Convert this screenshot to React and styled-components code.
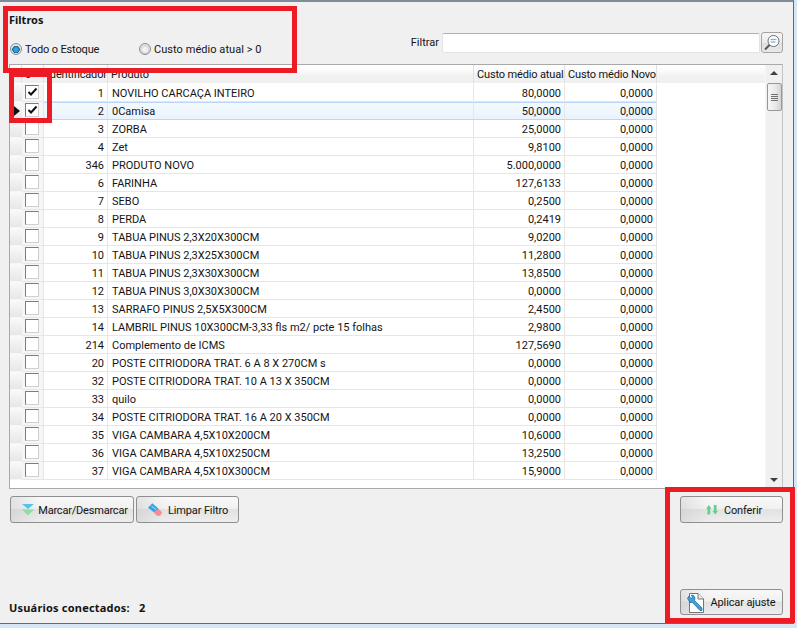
import React from "react";
import styled, { createGlobalStyle } from "styled-components";

const GlobalStyle = createGlobalStyle`
  html, body {
    margin: 0;
    padding: 0;
    background: #d6e6f4;
    overflow: hidden;
  }
  * {
    box-sizing: border-box;
  }
`;

const COLUMNS = "12px 22px 64px 366px 91px 92px 108px";

const products = [
  { id: 1, name: "NOVILHO CARCAÇA INTEIRO", cost: "80,0000", checked: true },
  { id: 2, name: "0Camisa", cost: "50,0000", checked: true, current: true },
  { id: 3, name: "ZORBA", cost: "25,0000" },
  { id: 4, name: "Zet", cost: "9,8100" },
  { id: 346, name: "PRODUTO NOVO", cost: "5.000,0000" },
  { id: 6, name: "FARINHA", cost: "127,6133" },
  { id: 7, name: "SEBO", cost: "0,2500" },
  { id: 8, name: "PERDA", cost: "0,2419" },
  { id: 9, name: "TABUA PINUS 2,3X20X300CM", cost: "9,0200" },
  { id: 10, name: "TABUA PINUS 2,3X25X300CM", cost: "11,2800" },
  { id: 11, name: "TABUA PINUS 2,3X30X300CM", cost: "13,8500" },
  { id: 12, name: "TABUA PINUS 3,0X30X300CM", cost: "0,0000" },
  { id: 13, name: "SARRAFO PINUS 2,5X5X300CM", cost: "2,4500" },
  { id: 14, name: "LAMBRIL PINUS 10X300CM-3,33 fls m2/ pcte 15 folhas", cost: "2,9800" },
  { id: 214, name: "Complemento de ICMS", cost: "127,5690" },
  { id: 20, name: "POSTE CITRIODORA TRAT. 6 A 8 X 270CM s", cost: "0,0000" },
  { id: 32, name: "POSTE CITRIODORA TRAT. 10 A 13 X 350CM", cost: "0,0000" },
  { id: 33, name: "quilo", cost: "0,0000" },
  { id: 34, name: "POSTE CITRIODORA TRAT. 16 A 20 X 350CM", cost: "0,0000" },
  { id: 35, name: "VIGA CAMBARA 4,5X10X200CM", cost: "10,6000" },
  { id: 36, name: "VIGA CAMBARA 4,5X10X250CM", cost: "13,2500" },
  { id: 37, name: "VIGA CAMBARA 4,5X10X300CM", cost: "15,9000" },
];

const Page = styled.div`
  position: relative;
  width: 797px;
  height: 628px;
  font-family: Roboto, "Liberation Sans", Arial, sans-serif;
  font-size: 11px;
  color: #141414;
  background: #d6e6f4;
  overflow: hidden;
`;

const Frame = styled.div`
  width: 794px;
  height: 624px;
  display: flex;
  flex-direction: column;
  padding: 0 10px 0 9px;
  background: #f0f0f0;
  border-right: 1px solid #5c6b7a;
  border-bottom: 1px solid #5c6b7a;
  border-top: 2px solid #7f8d9a;
`;

const FilterBar = styled.div`
  height: 62px;
  flex: none;
  display: flex;
  justify-content: space-between;
`;

const FilterGroup = styled.div`
  display: flex;
  flex-direction: column;
`;

const Title = styled.div`
  font-family: "Noto Sans", Arial, sans-serif;
  font-weight: bold;
  margin-top: 11px;
  line-height: 13px;
`;

const RadioRow = styled.div`
  display: flex;
  margin-top: 16px;
  margin-left: 1px;
`;

const RadioLabel = styled.label`
  display: flex;
  align-items: center;
  gap: 3px;
  height: 14px;
  letter-spacing: ${(p) => p.$spacing || 0}px;
  width: ${(p) => p.$width}px;
`;

const RadioDot = styled.span`
  width: 12px;
  height: 12px;
  border-radius: 50%;
  border: 1px solid #8b8b8b;
  background: ${(p) =>
    p.$on
      ? "radial-gradient(circle at 50% 55%, #2f9fe0 0 2px, #1b5f8e 3.5px, #e6e6e6 4px)"
      : "radial-gradient(circle at 50% 55%, #f4f4f4 0 2px, #d2d2d2 4px, #ececec 5px)"};
`;

const SearchGroup = styled.div`
  display: flex;
  align-items: center;
  margin-top: 30px;
  height: 21px;
`;

const SearchLabel = styled.span`
  margin-right: 3px;
`;

const SearchInput = styled.div`
  width: 318px;
  height: 20px;
  background: #fff;
  border: 1px solid #dfe3e8;
  border-top-color: #aab0b6;
  border-radius: 2px;
`;

const SearchButton = styled.div`
  width: 22px;
  height: 21px;
  margin-left: 1px;
  display: flex;
  align-items: center;
  justify-content: center;
  border: 1px solid #a4a4a4;
  border-radius: 3px;
  background: linear-gradient(#f7f7f7, #ececec 50%, #dfdfdf 52%, #e9e9e9);
`;

const Table = styled.div`
  flex: none;
  position: relative;
  width: 774px;
  height: 425px;
  background: #fff;
  border: 1px solid #a9a9a9;
  border-right-color: #c4c4c4;
  overflow: hidden;
`;

const HeaderRow = styled.div`
  display: grid;
  grid-template-columns: ${COLUMNS};
  height: 18px;
  background: linear-gradient(#fff, #f9f9f9 40%, #f1f1f1 60%, #f0f0f0);
`;

const HeaderCell = styled.div`
  border-right: ${(p) => (p.$plain ? "none" : "1px solid #e0e0e0")};
  padding: 1px 0 0 3px;
  line-height: 17px;
  letter-spacing: -0.15px;
  white-space: nowrap;
  overflow: hidden;
`;

const Row = styled.div`
  display: grid;
  grid-template-columns: ${COLUMNS};
  height: 18px;
  margin-top: ${(p) => (p.$first ? "1px" : "0")};
`;

const Indicator = styled.div`
  display: flex;
  align-items: center;
  justify-content: center;
  background: linear-gradient(#fafafa, #f0f0f0 50%, #e7e7e7);
  border-bottom: 1px solid #f7f7f7;
`;

const Arrow = styled.span`
  width: 0;
  height: 0;
  margin-left: 2px;
  border-left: 6px solid #111;
  border-top: 5px solid transparent;
  border-bottom: 5px solid transparent;
`;

const CheckCell = styled.div`
  padding: 1px 0 0 3px;
  border-right: 1px solid #e6e6e6;
  border-bottom: 1px solid #e6e6e6;
  background: #f6f6f6;
`;

const CheckBox = styled.div`
  width: 14px;
  height: 14px;
  display: flex;
  align-items: center;
  justify-content: center;
  background: #fff;
  border: 1px solid #cfcfcf;
  border-top-color: #7c7c7c;
  border-left-color: #7c7c7c;
`;

const Cell = styled.div`
  padding: ${(p) => (p.$current ? "1px" : "2px")} ${(p) => (p.$right ? "3px" : "0")} 0 ${(p) => (p.$right ? "0" : "4px")};
  text-align: ${(p) => (p.$right ? "right" : "left")};
  white-space: nowrap;
  overflow: hidden;
  border-right: 1px solid #e6e6e6;
  border-bottom: 1px solid #e6e6e6;
  background: ${(p) => (p.$current ? "linear-gradient(#f4f9fe, #e9f3fd)" : "#fff")};
  border-top: ${(p) => (p.$current ? "1px solid #b9d7fa" : "none")};
  border-bottom-color: ${(p) => (p.$current ? "#b9d7fa" : "#e6e6e6")};
  line-height: 15px;
`;

const ScrollTrack = styled.div`
  position: absolute;
  top: 0;
  right: 0;
  bottom: 0;
  width: 17px;
  display: flex;
  flex-direction: column;
  align-items: center;
  background: #f0f0f0;
  border-left: 1px solid #f7f7f7;
`;

const ScrollUp = styled.span`
  margin-top: 6px;
  width: 0;
  height: 0;
  border-left: 4px solid transparent;
  border-right: 4px solid transparent;
  border-bottom: 4px solid #3f3f3f;
`;

const ScrollThumb = styled.div`
  margin-top: 8px;
  width: 15px;
  height: 28px;
  display: flex;
  flex-direction: column;
  justify-content: center;
  align-items: center;
  gap: 1px;
  border: 1px solid #979797;
  border-radius: 2px;
  background: linear-gradient(90deg, #f6f6f6, #e9e9e9 55%, #d4d4d4);
`;

const ThumbLine = styled.span`
  width: 7px;
  height: 1px;
  background: #6f6f6f;
`;

const ScrollDown = styled.span`
  margin-top: auto;
  margin-bottom: 6px;
  width: 0;
  height: 0;
  border-left: 4px solid transparent;
  border-right: 4px solid transparent;
  border-top: 4px solid #3f3f3f;
`;

const Footer = styled.div`
  flex: 1;
  display: flex;
  justify-content: space-between;
  padding: 7px 0 7px 1px;
`;

const FooterLeft = styled.div`
  display: flex;
  flex-direction: column;
  justify-content: space-between;
`;

const FooterRight = styled.div`
  display: flex;
  flex-direction: column;
  justify-content: space-between;
  margin-bottom: 1px;
`;

const ButtonRow = styled.div`
  display: flex;
  gap: 2px;
`;

const Button = styled.div`
  width: ${(p) => p.$width}px;
  height: ${(p) => p.$height || 27}px;
  display: flex;
  align-items: center;
  justify-content: center;
  gap: ${(p) => p.$gap || 6}px;
  padding: 1px 0 0 ${(p) => p.$shift || 0}px;
  letter-spacing: ${(p) => p.$spacing || -0.12}px;
  border: 1px solid #8f8f8f;
  border-radius: 3px;
  background:
    linear-gradient(90deg, rgba(190, 190, 190, 0.35), rgba(190, 190, 190, 0) 28px),
    linear-gradient(#f8f8f8, #f1f1f1 46%, #e2e2e2 50%, #ededed);
`;

const Connected = styled.div`
  font-family: "Noto Sans", Arial, sans-serif;
  margin-left: -1px;
  margin-bottom: 2px;
  font-weight: bold;
  line-height: 13px;
  letter-spacing: 0.2px;
  white-space: pre;
`;

const Annotation = styled.div`
  position: absolute;
  left: ${(p) => p.$x}px;
  top: ${(p) => p.$y}px;
  width: ${(p) => p.$w}px;
  height: ${(p) => p.$h}px;
  border: 5px solid #ed1c24;
`;

function CheckIcon() {
  return (
    <svg width="11" height="10" viewBox="0 0 11 10">
      <path d="M1.5 5 L4 7.5 L9.5 1.5" fill="none" stroke="#111" strokeWidth="2" />
    </svg>
  );
}

function SearchIcon() {
  return (
    <svg width="18" height="18" viewBox="0 0 18 18">
      <circle cx="10.5" cy="7" r="5.5" fill="#fff" stroke="#6d6d6d" />
      <path d="M7.5 5.5h6" stroke="#55c6ee" strokeWidth="1.3" />
      <path d="M7.5 8h5" stroke="#7fb2e8" strokeWidth="1.3" />
      <path d="M6.5 11 L2 15.5" stroke="#555" strokeWidth="2" />
    </svg>
  );
}

function MarkIcon() {
  return (
    <svg width="14" height="12" viewBox="0 0 14 12">
      <path d="M1 0h12l-6 5z" fill="#55c5ee" />
      <path d="M1 5.5h12L7 11.5z" fill="#8fdca5" />
    </svg>
  );
}

function EraserIcon() {
  return (
    <svg width="16" height="14" viewBox="0 0 18 15">
      <path d="M6 0 L13 6 L9 11 L1 5z" fill="#2fa6e6" />
      <path d="M13 6 L17 10 L15 14 L11 14 L7.5 10z" fill="#f58d96" />
      <path d="M5 3 L10 7" stroke="#bfe8fb" strokeWidth="1" />
    </svg>
  );
}

function CheckArrowsIcon() {
  return (
    <svg width="12" height="10" viewBox="0 0 13 11">
      <path d="M3 0 L6 4 H4.5 V10.5 H1.5 V4 H0z" fill="#63cf90" />
      <path d="M10 10.5 L13 6.5 H11.5 V0 H8.5 V6.5 H7z" fill="#63cf90" />
    </svg>
  );
}

function AdjustIcon() {
  return (
    <svg width="17" height="20" viewBox="0 0 17 20">
      <path d="M2.5 .5H11L16.5 6V19.5H2.5z" fill="#fff" stroke="#555" strokeWidth=".8" />
      <path d="M11 .5V6H16.5" fill="#ececec" stroke="#555" strokeWidth=".8" />
      <path
        d="M.5 5.5 L2 3 L4 5.5 L5.5 4.5 L4.5 2 L6.5 2.5 L8 5 L7.5 7.5 L15 15 L15 17.5 L13 17.5 L5.5 9.5 L3 9.5z"
        fill="#3ba4e0"
        stroke="#1d5f8c"
        strokeWidth=".7"
      />
    </svg>
  );
}

function ProductRow({ item, first }) {
  return (
    <Row $first={first}>
      <Indicator>{item.current && <Arrow />}</Indicator>
      <CheckCell>
        <CheckBox>{item.checked && <CheckIcon />}</CheckBox>
      </CheckCell>
      <Cell $right $current={item.current}>{item.id}</Cell>
      <Cell $current={item.current}>{item.name}</Cell>
      <Cell $right $current={item.current}>{item.cost}</Cell>
      <Cell $right $current={item.current}>0,0000</Cell>
    </Row>
  );
}

export default function App() {
  return (
    <Page>
      <GlobalStyle />
      <Frame>
        <FilterBar>
          <FilterGroup>
            <Title>Filtros</Title>
            <RadioRow>
              <RadioLabel $width={129} $spacing={-0.15}>
                <RadioDot $on />
                Todo o Estoque
              </RadioLabel>
              <RadioLabel $width={150} $spacing={0.05}>
                <RadioDot />
                Custo médio atual &gt; 0
              </RadioLabel>
            </RadioRow>
          </FilterGroup>
          <SearchGroup>
            <SearchLabel>Filtrar</SearchLabel>
            <SearchInput />
            <SearchButton>
              <SearchIcon />
            </SearchButton>
          </SearchGroup>
        </FilterBar>

        <Table>
          <HeaderRow>
            <HeaderCell />
            <HeaderCell>o</HeaderCell>
            <HeaderCell>Identificador</HeaderCell>
            <HeaderCell>Produto</HeaderCell>
            <HeaderCell>Custo médio atual</HeaderCell>
            <HeaderCell>Custo médio Novo</HeaderCell>
            <HeaderCell $plain />
          </HeaderRow>
          {products.map((item, i) => (
            <ProductRow key={item.id} item={item} first={i === 0} />
          ))}
          <ScrollTrack>
            <ScrollUp />
            <ScrollThumb>
              <ThumbLine />
              <ThumbLine />
              <ThumbLine />
              <ThumbLine />
            </ScrollThumb>
            <ScrollDown />
          </ScrollTrack>
        </Table>

        <Footer>
          <FooterLeft>
            <ButtonRow>
              <Button $width={124} $gap={3} $shift={5} $spacing={-0.2}>
                <MarkIcon />
                Marcar/Desmarcar
              </Button>
              <Button $width={103} $gap={5}>
                <EraserIcon />
                Limpar Filtro
              </Button>
            </ButtonRow>
            <Connected>Usuários conectados:   2</Connected>
          </FooterLeft>
          <FooterRight>
            <Button $width={103} $shift={5}>
              <CheckArrowsIcon />
              Conferir
            </Button>
            <Button $width={103} $height={26} $gap={6}>
              <AdjustIcon />
              Aplicar ajuste
            </Button>
          </FooterRight>
        </Footer>
      </Frame>

      <Annotation $x={3} $y={6} $w={294} $h={67} />
      <Annotation $x={9} $y={72} $w={43} $h={51} />
      <Annotation $x={665} $y={487} $w={130} $h={136} />
    </Page>
  );
}
